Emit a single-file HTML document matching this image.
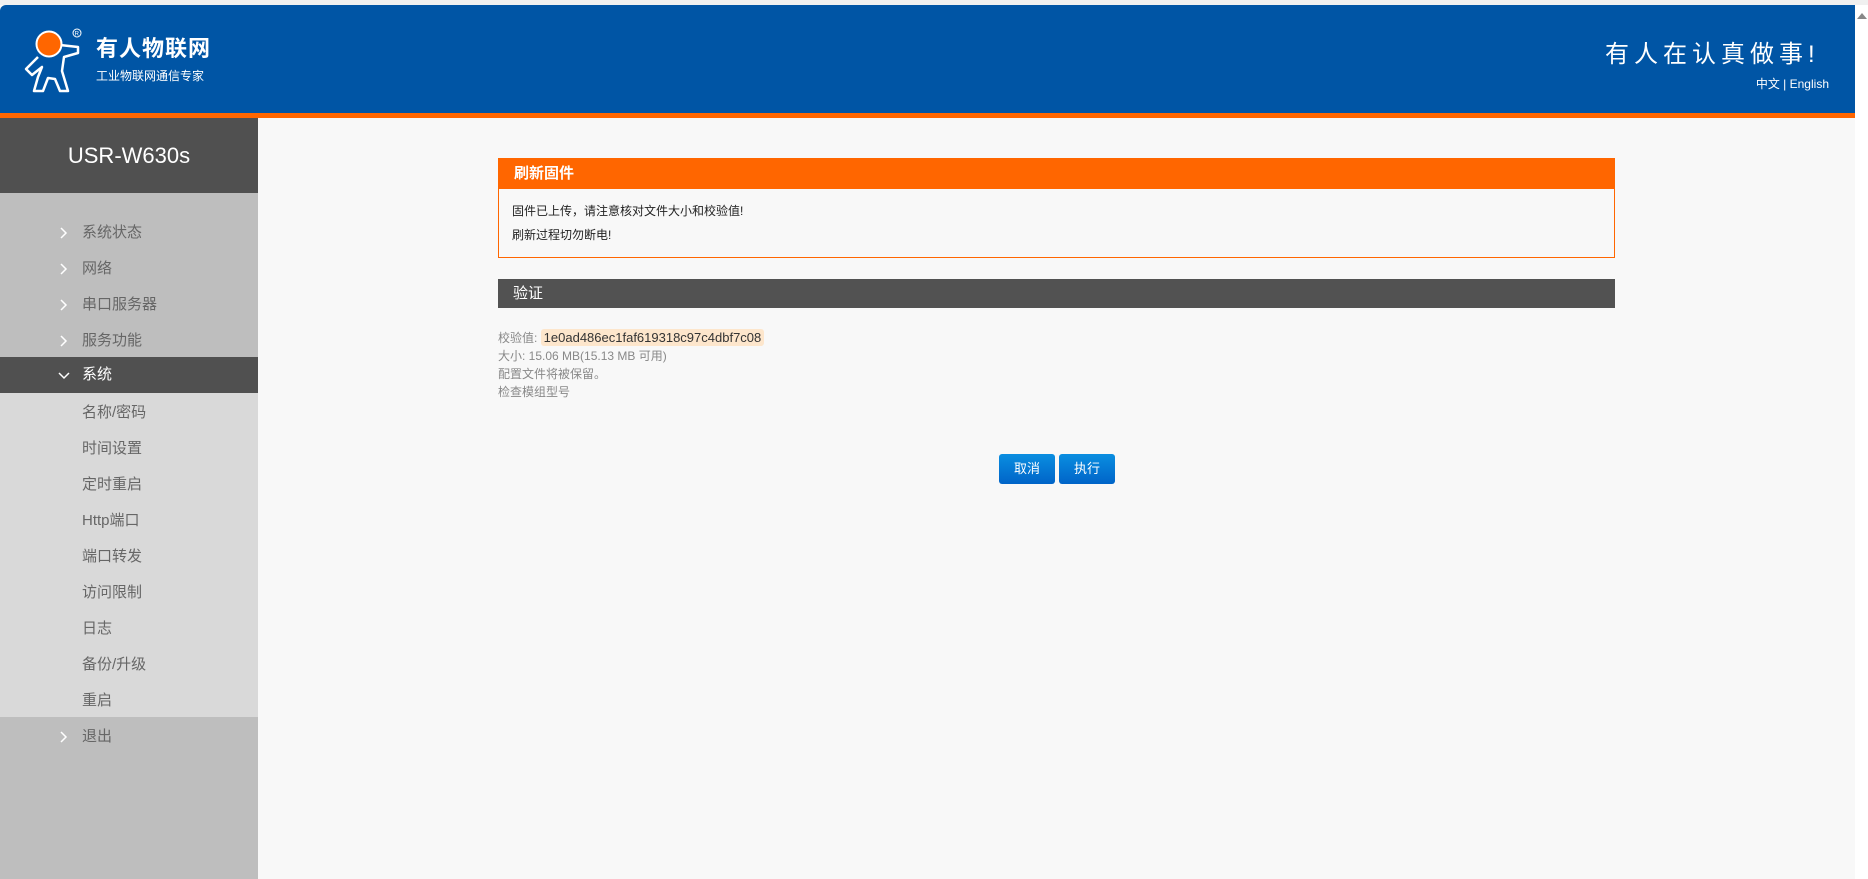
<!DOCTYPE html>
<html><head><meta charset="utf-8"><style>
*{margin:0;padding:0;box-sizing:border-box}
body{width:1868px;height:879px;background:#f8f8f8;font-family:"Liberation Sans","Noto Sans CJK SC",sans-serif;position:relative;overflow:hidden}
.top{position:absolute;left:0;top:0;width:1868px;height:5px;background:#f0f0f0}
.hdr{position:absolute;left:0;top:5px;width:1855px;height:108px;background:#0055a5;border-top-left-radius:6px}
.ob{position:absolute;left:0;top:113px;width:1855px;height:5px;background:#ff6600}
.sb{position:absolute;right:0;top:5px;width:13px;height:874px;background:#fff}
.side{position:absolute;left:0;top:118px;width:258px;height:761px;background:#bebebe}
.model{height:75px;background:#505050;color:#fff;font-size:22px;text-align:center;line-height:75px}
.it{position:absolute;left:0;width:258px;height:36px;line-height:36px;padding-left:82px;font-size:15px;color:#666}
.it svg{position:absolute;left:60px;top:12px}
.sel{background:#505050;color:#fff}
.subbg{position:absolute;left:0;top:275px;width:258px;height:324px;background:#d9d9d9}
.panel{position:absolute;left:498px;width:1117px}
</style></head><body>
<div class="top"></div>
<div class="hdr">
<svg style="position:absolute;left:18px;top:18px" width="70" height="72" viewBox="0 0 70 72">
<path d="M20 34 L8 46 L14 52 L24 44 L20 54 L16 68 L25 68 L30 55 L37 56 L42 68 L50 68 L44 48 L46 34 L60 30 L60 24 L42 22" fill="none" stroke="#fff" stroke-width="2.5" stroke-linejoin="round"/>
<circle cx="31" cy="21" r="12.5" fill="#ff6600" stroke="#fff" stroke-width="2"/>
<circle cx="59" cy="10" r="4" fill="none" stroke="#fff" stroke-width="1"/><text x="56.6" y="12.5" font-size="6" fill="#fff" font-family="Liberation Sans">R</text>
</svg>
<div style="position:absolute;left:96px;top:26px;color:#fff;font-size:22px;font-weight:bold;letter-spacing:1px">有人物联网</div>
<div style="position:absolute;left:96px;top:62px;color:#fff;font-size:12px">工业物联网通信专家</div>
<div style="position:absolute;left:1605px;top:29px;color:#fff;font-size:24px;letter-spacing:5px">有人在认真做事!</div>
<div style="position:absolute;right:26px;top:70px;color:#fff;font-size:12px">中文 | English</div>
</div>
<div class="ob"></div>
<div class="sb"><div style="margin:8px 0 0 2px;width:0;height:0;border-left:5px solid transparent;border-right:5px solid transparent;border-bottom:6px solid #888"></div></div>
<div class="side">
<div class="model">USR-W630s</div>
<div class="subbg"></div>
<div class="it" style="top:97px"><svg width="8" height="12"><path d="M1 1l5 5-5 5" fill="none" stroke="#fff" stroke-width="1.5"/></svg>系统状态</div>
<div class="it" style="top:133px"><svg width="8" height="12"><path d="M1 1l5 5-5 5" fill="none" stroke="#fff" stroke-width="1.5"/></svg>网络</div>
<div class="it" style="top:169px"><svg width="8" height="12"><path d="M1 1l5 5-5 5" fill="none" stroke="#fff" stroke-width="1.5"/></svg>串口服务器</div>
<div class="it" style="top:205px"><svg width="8" height="12"><path d="M1 1l5 5-5 5" fill="none" stroke="#fff" stroke-width="1.5"/></svg>服务功能</div>
<div class="it sel" style="top:239px;line-height:36px"><svg width="12" height="8" style="top:15px;left:58px"><path d="M1 1l5 5 5-5" fill="none" stroke="#fff" stroke-width="1.5"/></svg>系统</div>
<div class="it" style="top:277px">名称/密码</div>
<div class="it" style="top:313px">时间设置</div>
<div class="it" style="top:349px">定时重启</div>
<div class="it" style="top:385px">Http端口</div>
<div class="it" style="top:421px">端口转发</div>
<div class="it" style="top:457px">访问限制</div>
<div class="it" style="top:493px">日志</div>
<div class="it" style="top:529px">备份/升级</div>
<div class="it" style="top:565px">重启</div>
<div class="it" style="top:601px"><svg width="8" height="12"><path d="M1 1l5 5-5 5" fill="none" stroke="#fff" stroke-width="1.5"/></svg>退出</div>
</div>
<div class="panel" style="top:158px;height:100px;border:1px solid #ff6600">
<div style="background:#ff6600;height:30px;line-height:30px;color:#fff;font-weight:bold;font-size:15px;padding-left:15px">刷新固件</div>
<div style="font-size:12px;color:#222;padding-left:13px;line-height:24px;padding-top:10px">固件已上传，请注意核对文件大小和校验值!<br>刷新过程切勿断电!</div>
</div>
<div class="panel" style="top:279px;height:29px;background:#525252;color:#fff;font-size:15px;line-height:29px;padding-left:15px">验证</div>
<div style="position:absolute;left:498px;top:329px;font-size:12px;color:#888;line-height:18px">
校验值: <span style="background:#fde6cc;color:#333;padding:1px 3px;border-radius:3px;font-size:13px">1e0ad486ec1faf619318c97c4dbf7c08</span><br>大小: 15.06 MB(15.13 MB 可用)<br>配置文件将被保留。<br>检查模组型号</div>
<div style="position:absolute;left:999px;top:454px;width:56px;height:30px;background:linear-gradient(#0a8ee0,#0064c8);border-radius:3px;color:#fff;font-size:13px;text-align:center;line-height:30px">取消</div>
<div style="position:absolute;left:1059px;top:454px;width:56px;height:30px;background:linear-gradient(#0a8ee0,#0064c8);border-radius:3px;color:#fff;font-size:13px;text-align:center;line-height:30px">执行</div>
</body></html>
